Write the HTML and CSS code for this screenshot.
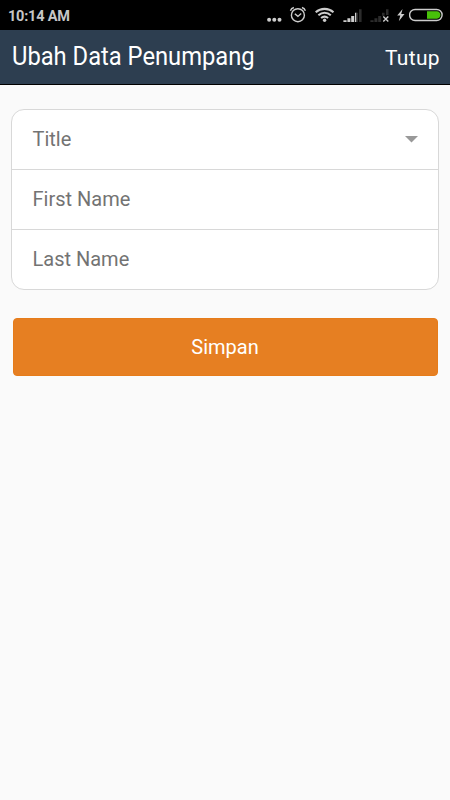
FILE: index.html
```html
<!DOCTYPE html>
<html lang="id">
<head>
<meta charset="utf-8">
<title>Ubah Data Penumpang</title>
<link rel="stylesheet" href="styles.css">
</head>
<body>
<div class="status">
  <span class="clock">10:14 AM</span>
  <div class="status-icons">
    <svg class="dots" width="16" height="30" viewBox="266 0 16 30"><circle cx="269.1" cy="19.8" r="2"/><circle cx="274.3" cy="19.8" r="2"/><circle cx="279.5" cy="19.8" r="2"/></svg>
    <svg class="alarm" width="18" height="30" viewBox="289 0 18 30"><g class="line"><circle cx="297.9" cy="15.2" r="6.5"/><path d="M290.4 10.8c.5-1.700 1.800-2.900 3.500-3.300M305.400 10.800c-.5-1.700-1.800-2.900-3.500-3.300M294.800 13.700l3.100 2.700 3.300-3"/></g></svg>
    <svg class="wifi" width="20" height="30" viewBox="315 0 20 30"><g class="arc"><path d="M315.700 12.200c5.200-4.400 12.600-4.400 17.800 0M318.400 15.200c3.700-3.100 8.700-3.100 12.400 0M321.100 18c2.100-1.700 4.900-1.700 7 0"/></g><circle cx="324.600" cy="20.200" r="1.700"/></svg>
    <svg class="signal" width="19" height="30" viewBox="343 0 19 30"><path d="M343.400 20.300h3.200V22h-3.200zM347.400 18.300h3V22h-3zM351.200 16h3V22h-3zM355 12.800h1.500V22H355z"/><path class="off" d="M356.500 12.800h1.500V22h-1.500zM359 9.300h2.600V22H359z"/></svg>
    <svg class="signal2" width="19" height="30" viewBox="370 0 19 30"><path class="off" d="M370.400 20.300h3.200V22h-3.200zM374.400 18.300h3V22h-3zM378.200 16h3V22h-3zM382 12.800h2.600v3H382zM386 9.300h2.500V15H386z"/><path class="cross" d="M383.300 16.400l5 5M388.300 16.400l-5 5"/></svg>
    <svg class="bolt" width="8" height="30" viewBox="397 0 8 30"><path d="M402.600 9l-5.400 6.600h3.100L398.800 21.300l5.700-7.300h-3.300z"/></svg>
    <svg class="battery" width="34" height="30" viewBox="409 0 34 30"><rect class="shell" x="409.600" y="9.500" width="32.500" height="11" rx="5.500"/><path class="charge" d="M427 11.300h9.800c4.800 0 4.800 7.400 0 7.400H427z"/></svg>
  </div>
</div>
<header class="bar">
  <h1>Ubah Data Penumpang</h1>
  <a class="close">Tutup</a>
</header>
<main>
  <div class="card">
    <div class="field"><span>Title</span><svg width="13" height="7" viewBox="0 0 13 7"><path d="M0 0h13L6.5 6.5z"/></svg></div>
    <div class="field"><span>First Name</span></div>
    <div class="field"><span>Last Name</span></div>
  </div>
  <div class="save">Simpan</div>
</main>
</body>
</html>
```
FILE: styles.css
```css
* { box-sizing: border-box; }
body {
  margin: 0;
  width: 450px;
  height: 800px;
  overflow: hidden;
  background: #fafafa;
  font-family: Roboto, sans-serif;
}
.status {
  display: flex;
  justify-content: space-between;
  height: 30px;
  padding: 0 7px 0 8px;
  background: #000;
}
.clock {
  font-size: 14.5px;
  font-weight: 700;
  line-height: 33px;
  letter-spacing: -0.2px;
  color: #c6c6c6;
}
.status-icons { display: flex; fill: #ccc; }
.status-icons svg { flex: none; }
.line, .cross, .shell { fill: none; stroke: #ccc; stroke-width: 1.4; }
.arc { fill: none; stroke: #ccc; stroke-width: 2.1; }
.off { fill: #2c2c2c; }
.alarm { margin-left: 7px; }
.wifi, .signal, .signal2, .bolt { margin-left: 8px; }
.battery { margin-left: 4px; }
.charge { fill: #48c10a; }
.bar {
  display: flex;
  justify-content: space-between;
  height: 55px;
  padding: 0 10px 0 12px;
  background: #2d3e50;
  border-bottom: 1px solid #000;
  color: #fff;
}
h1 {
  margin: 0;
  font-size: 25px;
  font-weight: 400;
  line-height: 53px;
  transform: scaleX(0.949);
  transform-origin: 0 50%;
}
.close {
  font-size: 21px;
  letter-spacing: 0.35px;
  line-height: 56px;
}
main { padding: 24px 12px 0 11px; }
.card {
  width: 428px;
  height: 181px;
  border: 1px solid #d8d8d8;
  border-radius: 13px;
  background: #fff;
}
.field {
  display: flex;
  align-items: center;
  justify-content: space-between;
  height: 60px;
  padding: 0 20px 0 20.5px;
  border-bottom: 1px solid #d8d8d8;
  font-size: 20px;
  color: #737373;
}
.field span { margin-top: -2px; }
.field:last-child { border-bottom: 0; }
.field svg { fill: #999; }
.save {
  width: 425px;
  height: 58px;
  margin: 28px 0 0 1.5px;
  border: 1px solid #e67c1a;
  border-radius: 4px;
  background: #e67f22;
  font-size: 20px;
  line-height: 57px;
  text-align: center;
  color: #fff;
}
```
